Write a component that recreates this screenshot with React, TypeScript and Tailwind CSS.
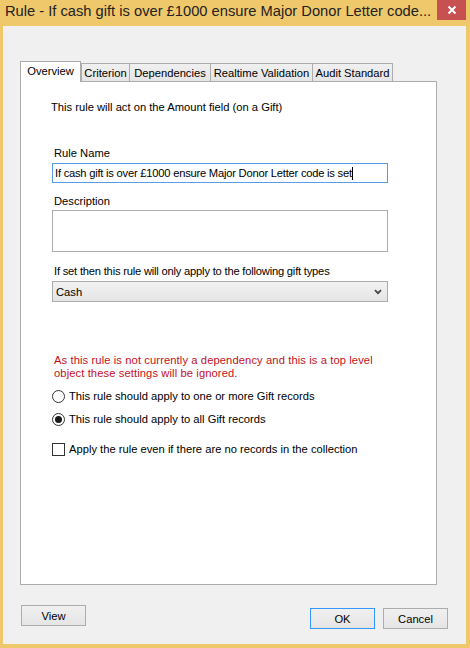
import React from "react";

const font = "font-['Liberation_Sans',Arial,sans-serif]";

function Tab({ label, w, selected, last }: { label: string; w: string; selected?: boolean; last?: boolean }) {
  if (selected) {
    return (
      <div
        className={`${w} h-[21px] -mb-px relative z-10 bg-white border-l border-t border-r border-[#acacac] flex items-start justify-center pt-[2px] text-[11.2px] leading-[14px] text-black`}
      >
        {label}
      </div>
    );
  }
  return (
    <div
      className={`${w} h-[18px] bg-gradient-to-b from-[#f0f0f0] to-[#e5e5e5] border-t border-l ${last ? "border-r" : ""} border-[#acacac] flex items-center justify-center text-[11.2px] leading-[14px] text-black`}
    >
      {label}
    </div>
  );
}

function Radio({ checked, label }: { checked?: boolean; label: string }) {
  return (
    <div className="flex items-center h-[16px]">
      <div className="w-[13px] h-[13px] rounded-full border border-[#333] bg-white flex items-center justify-center">
        {checked && <div className="w-[7px] h-[7px] rounded-full bg-[#1a1a1a]" />}
      </div>
      <span className="ml-[4px] text-[11.2px] leading-[16px] text-black">{label}</span>
    </div>
  );
}

function Button({ label, primary, w = "w-[65px]" }: { label: string; primary?: boolean; w?: string }) {
  return (
    <div
      className={`${w} h-[21px] border ${primary ? "border-[#3399ff]" : "border-[#acacac]"} bg-gradient-to-b from-[#f0f0f0] to-[#e5e5e5] flex items-center justify-center text-[11.2px] leading-[14px] text-black`}
    >
      {label}
    </div>
  );
}

export default function App() {
  return (
    <div className={`w-[470px] h-[648px] bg-[#f0c86c] flex flex-col ${font}`}>
      {/* Title bar */}
      <div className="h-[26px] flex items-start pl-[5px] pr-[4px]">
        <div className="flex-1 pt-[1px] text-[14.7px] leading-[20px] text-[#222] whitespace-nowrap overflow-hidden">
          Rule - If cash gift is over £1000 ensure Major Donor Letter code...
        </div>
        <div className="w-[29px] h-[20px] bg-[#c75050] flex items-center justify-center">
          <svg width="10" height="10" viewBox="0 0 10 10">
            <path d="M1.5 1.5 L8.5 8.5 M8.5 1.5 L1.5 8.5" stroke="white" strokeWidth="2" />
          </svg>
        </div>
      </div>

      {/* Client area */}
      <div className="flex-1 ml-[3px] mr-[4px] mb-[4px] bg-[#f0f0f0] flex flex-col pl-[17px] pr-[18px] pt-[35px]">
        {/* Tabs */}
        <div className="flex items-end">
          <Tab label="Overview" w="w-[61px]" selected />
          <Tab label="Criterion" w="w-[48px]" />
          <Tab label="Dependencies" w="w-[81px]" />
          <Tab label="Realtime Validation" w="w-[102px]" />
          <Tab label="Audit Standard" w="w-[81px]" last />
        </div>

        {/* Panel */}
        <div className="mr-[11px] h-[504px] bg-white border border-[#acacac] flex flex-col pl-[31px] text-black">
          <div className="mt-[17px] -ml-px text-[11.2px] leading-[16px]">
            This rule will act on the Amount field (on a Gift)
          </div>

          <div className="mt-[30px] ml-[2px] text-[11.2px] leading-[16px]">Rule Name</div>
          <div className="mt-[2px] w-[336px] h-[20px] border border-[#569de5] bg-white flex items-center pl-[2px] text-[11.2px] leading-[14px] tracking-[-0.23px]">
            <span>If cash gift is over £1000 ensure Major Donor Letter code is set</span>
            <span className="w-px h-[13px] bg-black" />
          </div>

          <div className="mt-[10px] ml-[2px] text-[11.2px] leading-[16px]">Description</div>
          <div className="mt-[1px] w-[336px] h-[42px] border border-[#abadb3] bg-white" />

          <div className="mt-[11px] ml-[2px] text-[11.2px] leading-[16px] tracking-[-0.21px]">
            If set then this rule will only apply to the following gift types
          </div>
          <div className="mt-[2px] w-[336px] h-[21px] border border-[#acacac] bg-gradient-to-b from-[#f2f2f2] to-[#e5e5e5] flex items-center justify-between pl-[3px] pr-[5px] text-[11.2px] leading-[14px]">
            <span>Cash</span>
            <svg width="8" height="6" viewBox="0 0 8 6">
              <path d="M1 1.2 L4 4.2 L7 1.2" stroke="#444" strokeWidth="1.8" fill="none" />
            </svg>
          </div>

          <div className="mt-[52px] ml-[2px] text-[11.2px] leading-[13px] tracking-[0.1px] text-[#c4101c]">
            As this rule is not currently a dependency and this is a top level
            <br />
            object these settings will be ignored.
          </div>

          <div className="mt-[8px]">
            <Radio label="This rule should apply to one or more Gift records" />
          </div>
          <div className="mt-[7px]">
            <Radio checked label="This rule should apply to all Gift records" />
          </div>

          <div className="mt-[14px] flex items-center h-[16px]">
            <div className="w-[13px] h-[13px] border border-[#333] bg-white" />
            <span className="ml-[4px] text-[11.2px] leading-[16px]">
              Apply the rule even if there are no records in the collection
            </span>
          </div>
        </div>

        {/* Buttons */}
        <div className="flex items-start justify-between">
          <div className="mt-[20px] ml-[1px]">
            <Button label="View" />
          </div>
          <div className="mt-[23px] flex gap-[8px]">
            <Button label="OK" primary />
            <Button label="Cancel" />
          </div>
        </div>
      </div>
    </div>
  );
}
